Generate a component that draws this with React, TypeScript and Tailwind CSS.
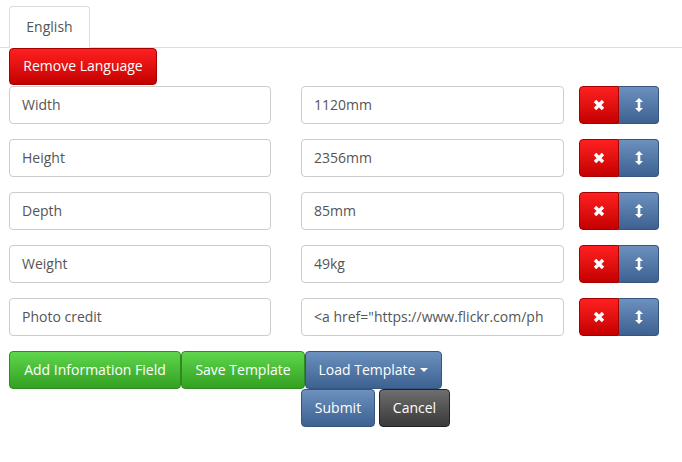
import React from "react";

const XIcon = () => (
  <svg width="12" height="12" viewBox="0 0 12 12">
    <path d="M2 2 L10 10 M10 2 L2 10" stroke="white" strokeWidth="3.4" strokeLinecap="butt" />
  </svg>
);

const VIcon = () => (
  <svg width="8" height="14" viewBox="0 0 8 14">
    <path d="M4 0 L8 4 L5.3 4 L5.3 10 L8 10 L4 14 L0 10 L2.7 10 L2.7 4 L0 4 Z" fill="white" />
  </svg>
);

const rows = [
  ["Width", "1120mm"],
  ["Height", "2356mm"],
  ["Depth", "85mm"],
  ["Weight", "49kg"],
  ["Photo credit", '<a href="https://www.flickr.com/ph'],
];

const inputCls =
  "h-[38px] rounded-[4px] border border-[#cccccc] bg-white px-[12px] pb-[2px] text-[14px] text-[#555555] flex items-center overflow-hidden whitespace-nowrap";

export default function App() {
  return (
    <div className="w-[682px] h-[462px] bg-white text-[14px] font-['Open_Sans',sans-serif] text-[#555555]">
      <div className="pt-[6px] flex border-b border-[#dddddd] pl-[9px]">
        <div className="h-[42px] w-[81px] -mb-px flex items-center justify-center pb-[2px] border border-[#dddddd] border-b-white rounded-t-[4px] bg-white text-[#555555]">
          English
        </div>
      </div>
      <div className="pl-[9px]">
        <button className="h-[37px] w-[148px] pb-[2px] rounded-[4px] border border-[#a50000] bg-linear-to-b from-[#ff1f1f] to-[#c40000] text-white">
          Remove Language
        </button>
        <div className="flex flex-col gap-[15px] mt-px">
          {rows.map(([a, b]) => (
            <div key={a} className="flex items-center">
              <div className={inputCls + " w-[262px]"}>{a}</div>
              <div className={inputCls + " w-[263px] ml-[30px]"}>{b}</div>
              <div className="flex ml-[15px]">
                <div className="w-[40px] h-[38px] rounded-l-[4px] border border-[#a50000] bg-linear-to-b from-[#ff1f1f] to-[#c40000] flex items-center justify-center">
                  <XIcon />
                </div>
                <div className="w-[40px] h-[38px] rounded-r-[4px] border border-[#35557e] border-l-0 bg-linear-to-b from-[#6c91bf] to-[#3d6190] flex items-center justify-center">
                  <VIcon />
                </div>
              </div>
            </div>
          ))}
        </div>
        <div className="flex mt-[15px]">
          <button className="h-[38px] w-[172px] pb-[2px] rounded-[4px] border border-[#2e8a1e] bg-linear-to-b from-[#5fd64d] to-[#32a11f] text-white">
            Add Information Field
          </button>
          <button className="h-[38px] w-[124px] pb-[2px] rounded-[4px] border border-[#2e8a1e] bg-linear-to-b from-[#5fd64d] to-[#32a11f] text-white">
            Save Template
          </button>
          <button className="h-[38px] w-[137px] pb-[2px] rounded-[4px] border border-[#35557e] bg-linear-to-b from-[#6c91bf] to-[#3d6190] text-white flex items-center justify-center gap-[5px]">
            Load Template
            <span className="inline-block w-0 h-0 mt-[2px] border-l-[4px] border-r-[4px] border-t-[4px] border-l-transparent border-r-transparent border-t-white" />
          </button>
        </div>
        <div className="flex ml-[292px] gap-[4px]">
          <button className="h-[38px] w-[74px] pb-[2px] rounded-[4px] border border-[#35557e] bg-linear-to-b from-[#6c91bf] to-[#3d6190] text-white">
            Submit
          </button>
          <button className="h-[38px] w-[71px] pb-[2px] rounded-[4px] border border-[#222222] bg-linear-to-b from-[#6e6e6e] to-[#3a3a3a] text-white">
            Cancel
          </button>
        </div>
      </div>
    </div>
  );
}
